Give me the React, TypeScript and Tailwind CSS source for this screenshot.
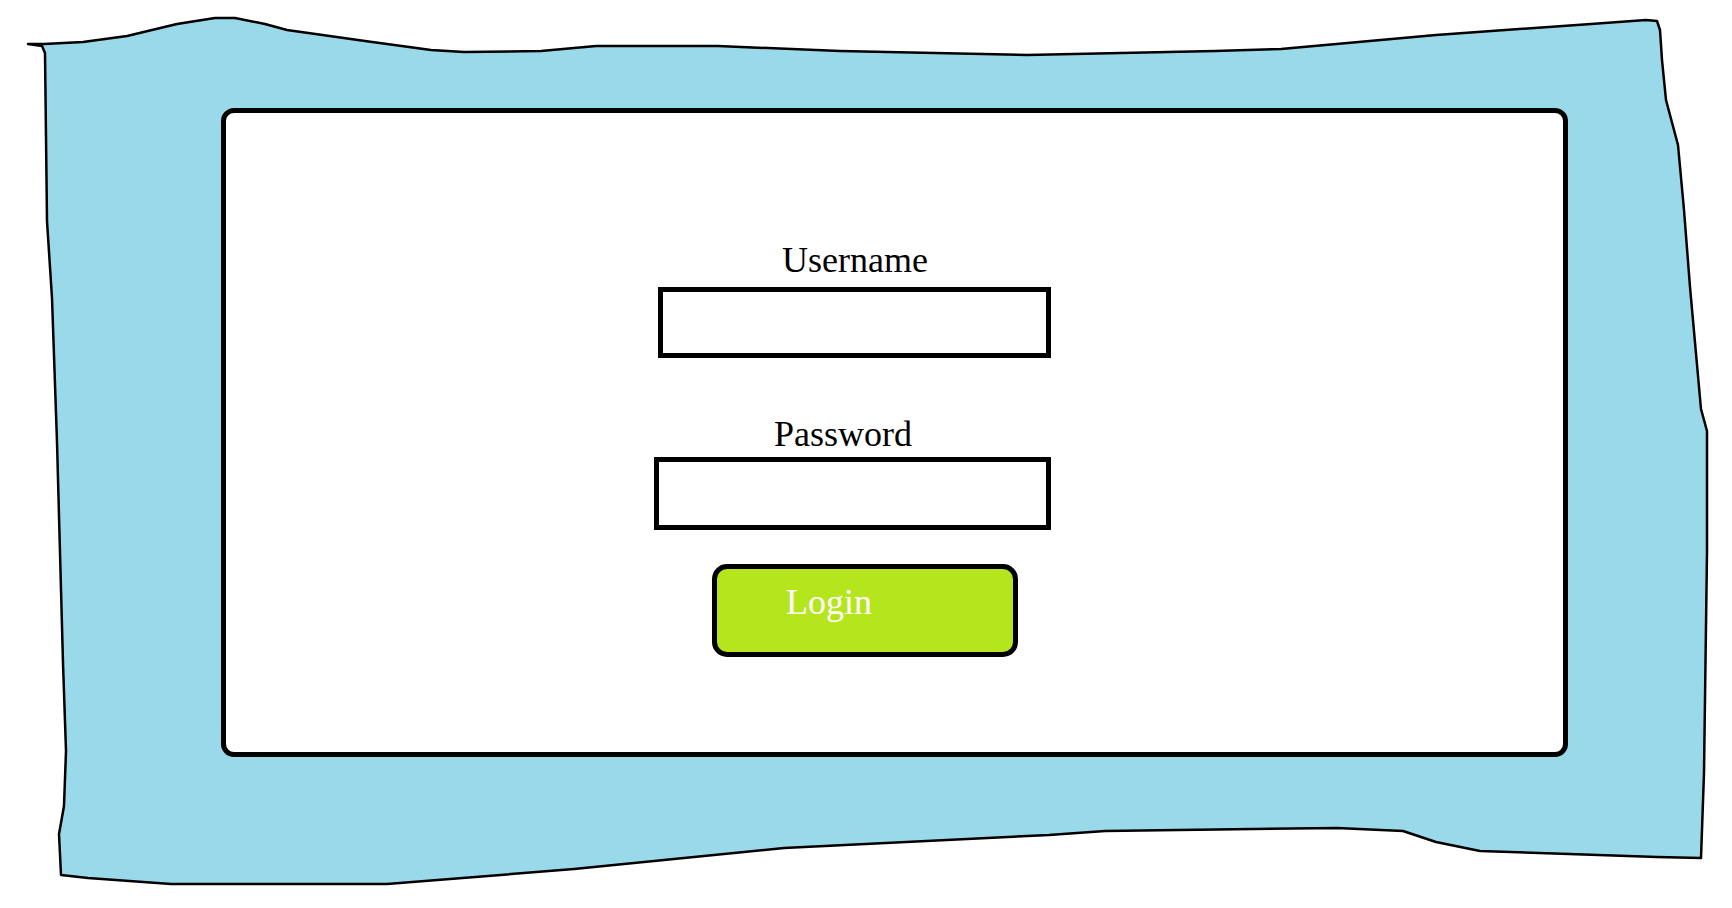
const blob =
  'M28 44 L44 44 L83 42 L127 36 L177 24 L215 18 L235 18 L265 24 L287 30 L365 41 L431 50 L464 52 L541 51 L596 46 L718 46 L840 51 L1027 55 L1215 51 L1281 49 L1436 35 L1591 24 L1646 20 L1657 21 L1660 30 L1662 60 L1666 100 L1678 145 L1684 210 L1690 287 L1701 409 L1707 431 L1707 552 L1704 773 L1701 858 L1657 857 L1569 854 L1480 851 L1436 842 L1403 831 L1337 828 L1105 831 L1049 835 L784 848 L574 869 L387 884 L171 884 L88 878 L61 875 L59 834 L64 806 L66 751 L63 663 L57 442 L52 298 L47 221 L45 53 L42 46 Z';

export default function App() {
  return (
    <div className="relative h-[908px] w-[1732px] overflow-hidden bg-white" style={{ fontFamily: '"Liberation Serif", "Times New Roman", serif' }}>
      {/* hand drawn backdrop */}
      <svg className="absolute inset-0" width="1732" height="908" viewBox="0 0 1732 908">
        <path d={blob} fill="#99d9ea" stroke="#000" strokeWidth="2.5" strokeLinejoin="round" />
      </svg>

      <div className="relative ml-[221px] pt-[108px]">
        <div className="h-[649px] w-[1347px] rounded-[13px] border-[5px] border-black bg-white pt-[127px]">
          <div className="ml-[556px] text-[36px] leading-[40px] text-black">Username</div>
          <div className="mt-[7px] ml-[432px] h-[71px] w-[393px] border-[5px] border-black bg-white" />

          <div className="mt-[56px] ml-[548px] text-[36px] leading-[40px] text-black">Password</div>
          <div className="mt-[3px] ml-[428px] h-[73px] w-[397px] border-[5px] border-black bg-white" />

          <button className="mt-[34px] ml-[486px] flex h-[93px] w-[306px] items-start rounded-[15px] border-[5px] border-black bg-[#b5e61d] pt-[13px] pl-[69px] text-[36px] leading-[40px] text-white">
            Login
          </button>
        </div>
      </div>
    </div>
  );
}
